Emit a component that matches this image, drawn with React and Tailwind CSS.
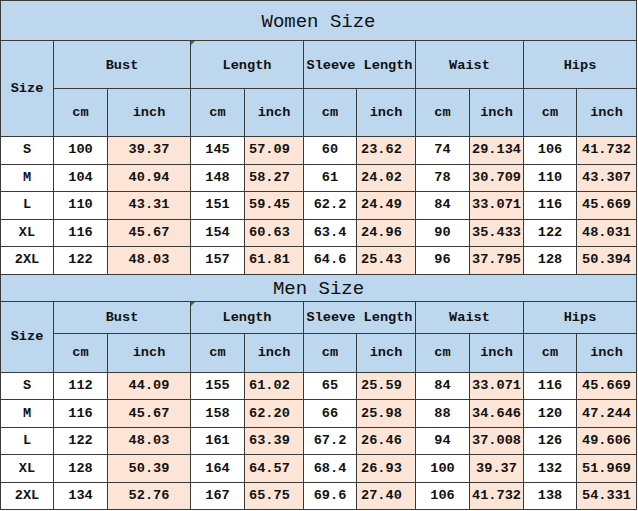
import React from "react";

const women = [
    ["S", "100", "39.37", "145", "57.09", "60", "23.62", "74", "29.134", "106", "41.732"],
    ["M", "104", "40.94", "148", "58.27", "61", "24.02", "78", "30.709", "110", "43.307"],
    ["L", "110", "43.31", "151", "59.45", "62.2", "24.49", "84", "33.071", "116", "45.669"],
    ["XL", "116", "45.67", "154", "60.63", "63.4", "24.96", "90", "35.433", "122", "48.031"],
    ["2XL", "122", "48.03", "157", "61.81", "64.6", "25.43", "96", "37.795", "128", "50.394"],
];

const men = [
    ["S", "112", "44.09", "155", "61.02", "65", "25.59", "84", "33.071", "116", "45.669"],
    ["M", "116", "45.67", "158", "62.20", "66", "25.98", "88", "34.646", "120", "47.244"],
    ["L", "122", "48.03", "161", "63.39", "67.2", "26.46", "94", "37.008", "126", "49.606"],
    ["XL", "128", "50.39", "164", "64.57", "68.4", "26.93", "100", "39.37", "132", "51.969"],
    ["2XL", "134", "52.76", "167", "65.75", "69.6", "27.40", "106", "41.732", "138", "54.331"],
];

const groups = ["Bust", "Length", "Sleeve Length", "Waist", "Hips"];

const cell = "border border-[#3a3a3a] p-0 text-center align-middle";
const head = cell + " bg-[#bdd7ee]";

function Section({ title, rows, titleH, head1H, head2H, rowH, titlePad }) {
    return (
        <>
            <tr className={titleH}>
                <td colSpan={11} className={head + " font-normal !text-[19px] " + titlePad}>{title}</td>
            </tr>
            <tr className={head1H}>
                <td rowSpan={2} className={head}>Size</td>
                {groups.map((g, i) => (
                    <td key={g} colSpan={2} className={head + " relative pt-[2px]"}>
                        {i === 1 && (
                            <span className="absolute left-0 top-0 w-0 h-0 border-t-[4px] border-r-[4px] border-t-[#2e7d32] border-r-transparent"></span>
                        )}
                        {g}
                    </td>
                ))}
            </tr>
            <tr className={head2H}>
                {groups.map((g) => (
                    <React.Fragment key={g}>
                        <td className={head}>cm</td>
                        <td className={head}>inch</td>
                    </React.Fragment>
                ))}
            </tr>
            {rows.map((r) => (
                <tr key={r[0]} className={rowH}>
                    {r.map((v, i) => {
                        const inch = i > 0 && i % 2 === 0;
                        const left = i === 4 || i === 6;
                        return (
                            <td
                                key={i}
                                className={cell + (inch ? " bg-[#fce4d6]" : " bg-white") + (left ? " !text-left pl-[4px]" : "")}
                            >
                                {v}
                            </td>
                        );
                    })}
                </tr>
            ))}
        </>
    );
}

export default function App() {
    return (
        <div className="w-[638px] h-[511px] bg-white overflow-hidden">
            <table
                className="w-[636px] table-fixed border-collapse text-[#111111] font-bold text-[14px] leading-none"
                style={{ fontFamily: '"Liberation Mono", "DejaVu Sans Mono", monospace' }}
            >
                <colgroup>
                    <col className="w-[53px]" />
                    <col className="w-[54px]" />
                    <col className="w-[83px]" />
                    <col className="w-[54px]" />
                    <col className="w-[59px]" />
                    <col className="w-[53px]" />
                    <col className="w-[59px]" />
                    <col className="w-[54px]" />
                    <col className="w-[54px]" />
                    <col className="w-[53px]" />
                    <col className="w-[60px]" />
                </colgroup>
                <tbody className="[&_td]:text-[13.6px]">
                    <Section
                        title="Women Size"
                        rows={women}
                        titleH="h-[40px]"
                        head1H="h-[48px]"
                        head2H="h-[48px]"
                        rowH="h-[27.5px]"
                        titlePad="pt-[4px]"
                    />
                    <Section
                        title="Men Size"
                        rows={men}
                        titleH="h-[27px]"
                        head1H="h-[32px]"
                        head2H="h-[39px]"
                        rowH="h-[27.6px]"
                        titlePad="pt-[4px]"
                    />
                </tbody>
            </table>
        </div>
    );
}
